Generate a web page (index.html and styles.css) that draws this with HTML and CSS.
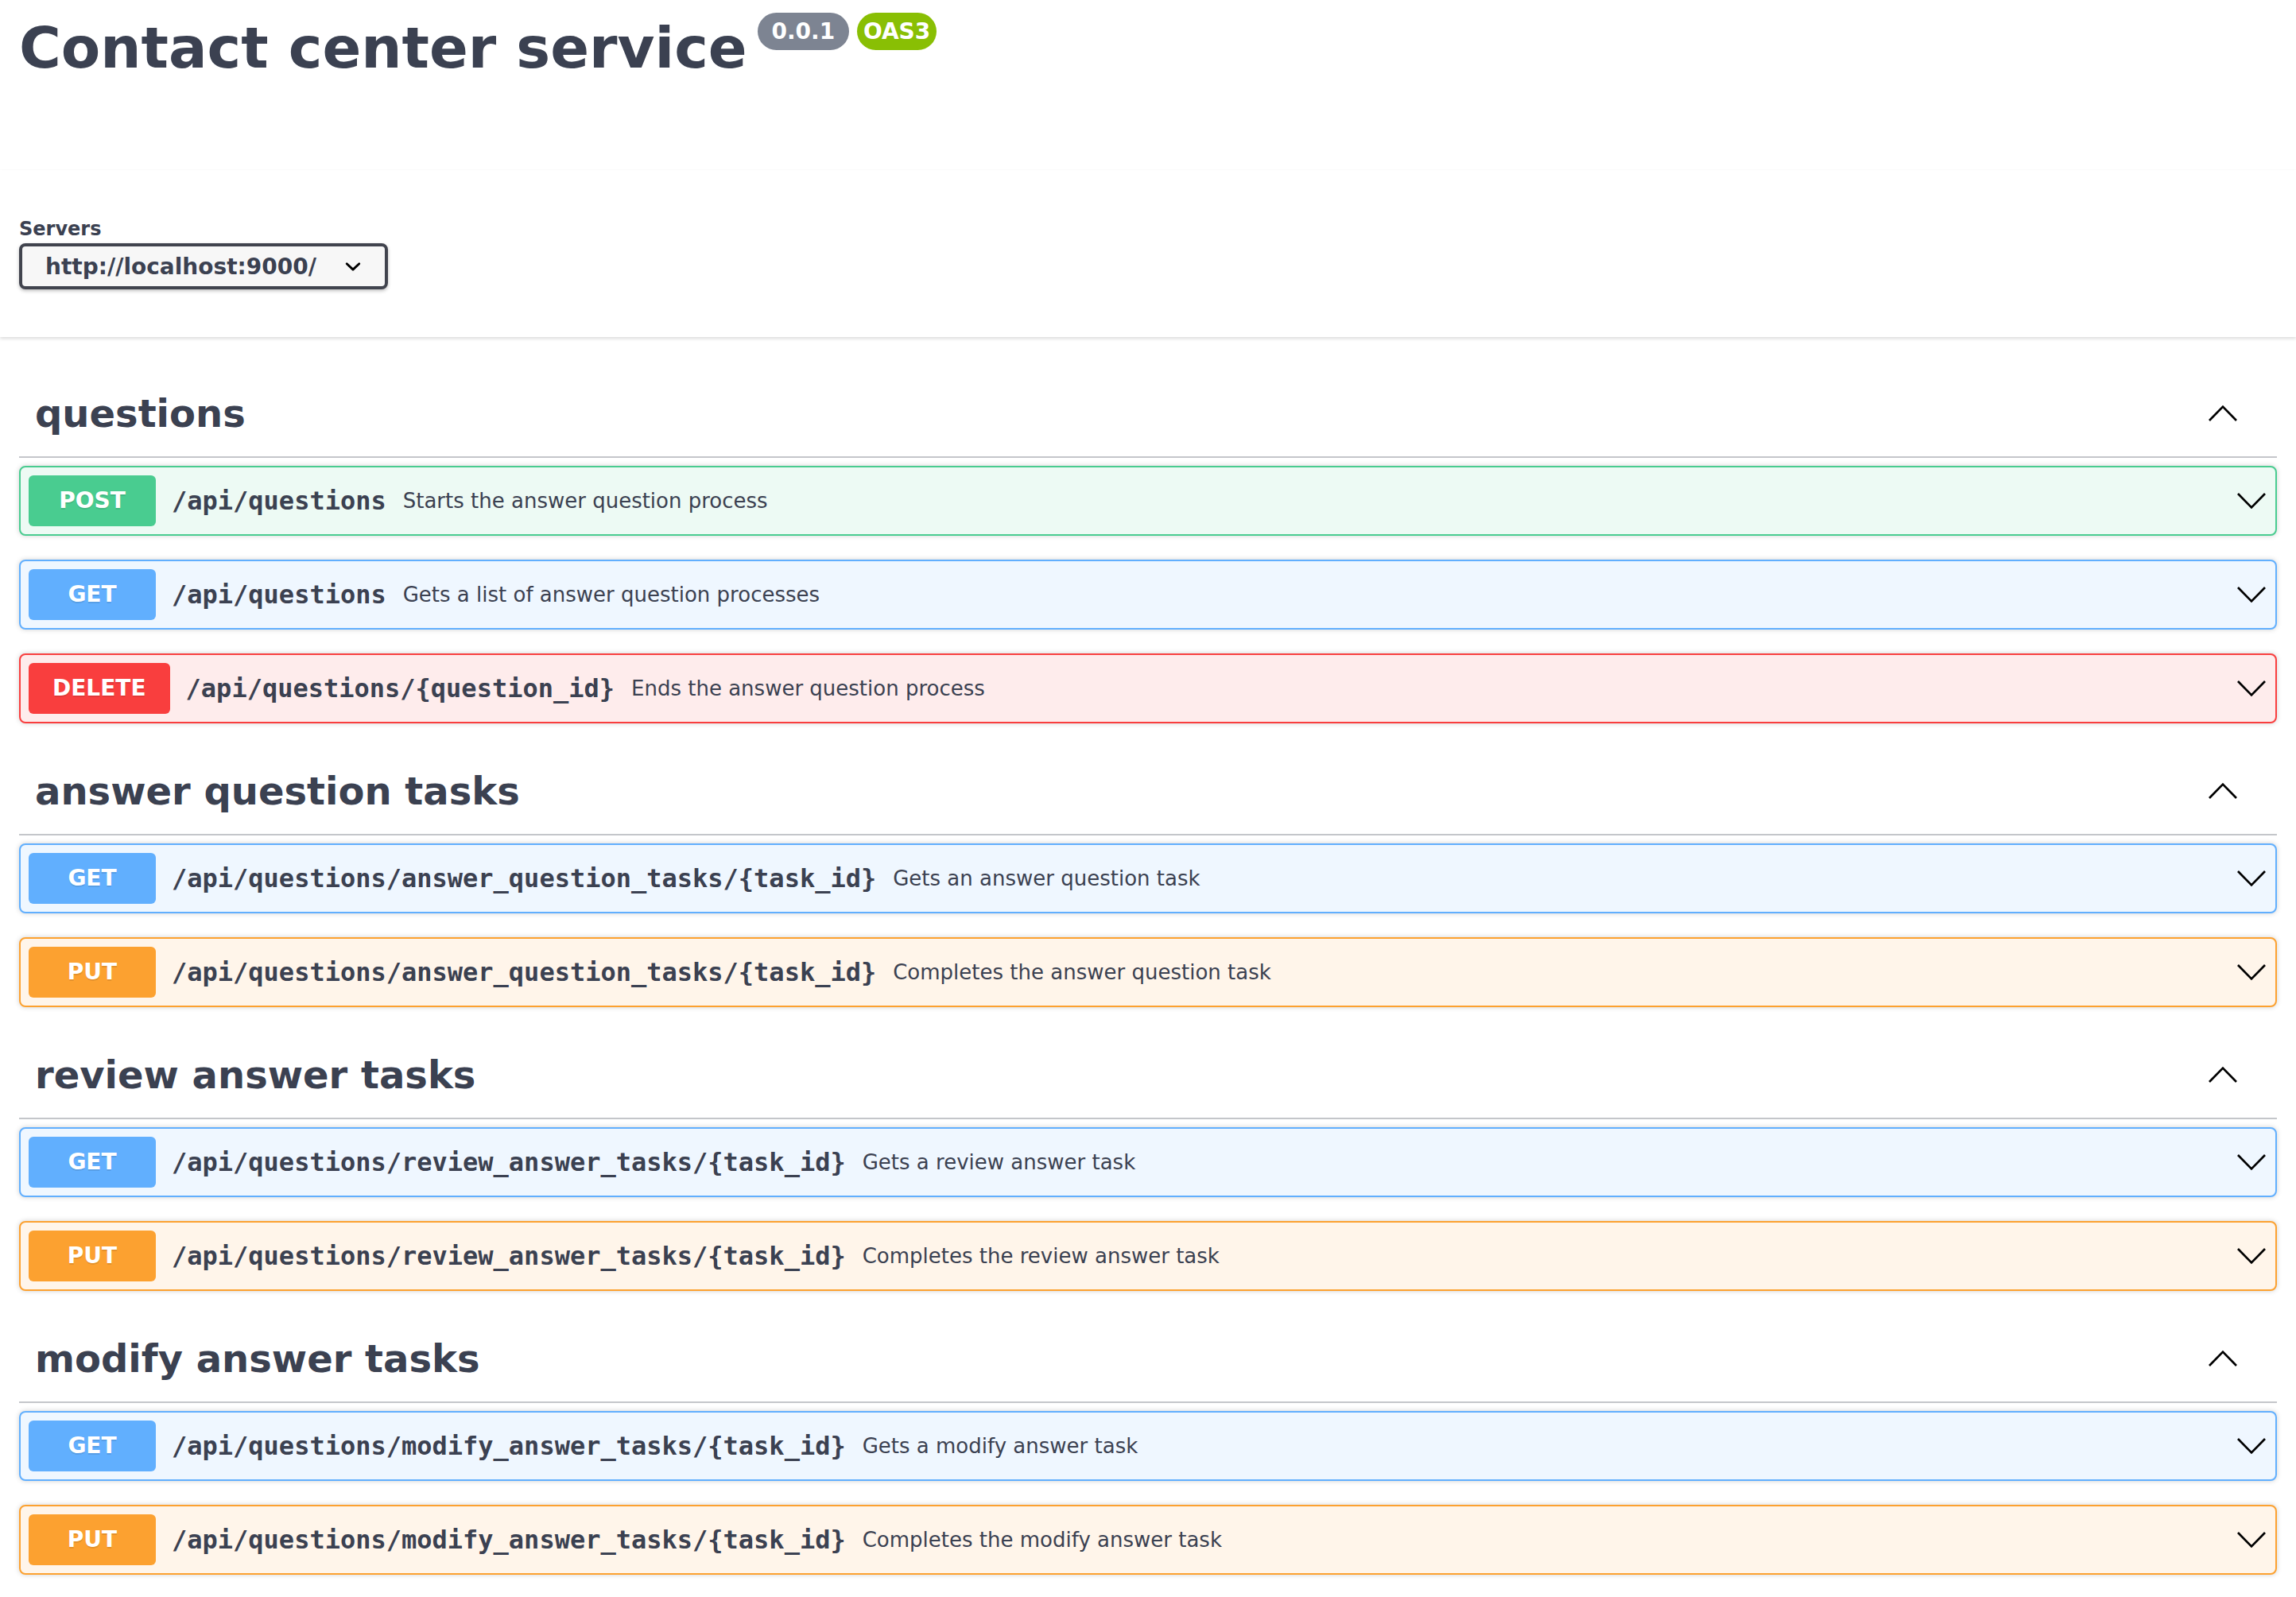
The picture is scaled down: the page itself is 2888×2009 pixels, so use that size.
FILE: index.html
```html
<!DOCTYPE html>
<html lang="en">
<head>
<meta charset="utf-8">
<title>Contact center service</title>
<link rel="stylesheet" href="styles.css">
</head>
<body>
<div class="swagger-ui">
  <div class="wrapper">
    <div class="info">
      <h1 class="title"><span class="title-text">Contact center service</span><small class="stamp version"><pre> 0.0.1 </pre></small><small class="stamp oas"><pre>OAS3</pre></small></h1>
    </div>
  </div>

  <div class="scheme-container">
    <div class="wrapper">
      <div class="servers">
        <span class="servers-title">Servers</span>
        <div class="select"><span>http://localhost:9000/</span><svg class="select-arrow" viewBox="0 0 20 20" width="40" height="40"><path d="M13.418 7.859a.695.695 0 01.978 0 .68.68 0 010 .969l-3.908 3.83a.697.697 0 01-.979 0l-3.908-3.83a.68.68 0 010-.969.695.695 0 01.978 0L10 11l3.418-3.141z"/></svg></div>
      </div>
    </div>
  </div>

  <div class="wrapper ops">
    <section class="tag-section">
      <h3 class="opblock-tag"><span>questions</span><svg class="arrow" viewBox="0 0 20 20" width="40" height="40"><polyline points="1.5,14.5 10,5.8 18.5,14.5"/></svg></h3>
      <div class="opblock post">
        <div class="summary"><span class="method">POST</span><div class="pd"><span class="path">/api/questions</span><span class="desc">Starts the answer question process</span></div><svg class="arrow" viewBox="0 0 20 20" width="40" height="40"><polyline points="1.5,5.5 10,14.2 18.5,5.5"/></svg></div>
      </div>
      <div class="opblock get">
        <div class="summary"><span class="method">GET</span><div class="pd"><span class="path">/api/questions</span><span class="desc">Gets a list of answer question processes</span></div><svg class="arrow" viewBox="0 0 20 20" width="40" height="40"><polyline points="1.5,5.5 10,14.2 18.5,5.5"/></svg></div>
      </div>
      <div class="opblock delete">
        <div class="summary"><span class="method">DELETE</span><div class="pd"><span class="path">/api/questions/{question_id}</span><span class="desc">Ends the answer question process</span></div><svg class="arrow" viewBox="0 0 20 20" width="40" height="40"><polyline points="1.5,5.5 10,14.2 18.5,5.5"/></svg></div>
      </div>
    </section>

    <section class="tag-section">
      <h3 class="opblock-tag"><span>answer question tasks</span><svg class="arrow" viewBox="0 0 20 20" width="40" height="40"><polyline points="1.5,14.5 10,5.8 18.5,14.5"/></svg></h3>
      <div class="opblock get">
        <div class="summary"><span class="method">GET</span><div class="pd"><span class="path">/api/questions/answer_question_tasks/{task_id}</span><span class="desc">Gets an answer question task</span></div><svg class="arrow" viewBox="0 0 20 20" width="40" height="40"><polyline points="1.5,5.5 10,14.2 18.5,5.5"/></svg></div>
      </div>
      <div class="opblock put">
        <div class="summary"><span class="method">PUT</span><div class="pd"><span class="path">/api/questions/answer_question_tasks/{task_id}</span><span class="desc">Completes the answer question task</span></div><svg class="arrow" viewBox="0 0 20 20" width="40" height="40"><polyline points="1.5,5.5 10,14.2 18.5,5.5"/></svg></div>
      </div>
    </section>

    <section class="tag-section">
      <h3 class="opblock-tag"><span>review answer tasks</span><svg class="arrow" viewBox="0 0 20 20" width="40" height="40"><polyline points="1.5,14.5 10,5.8 18.5,14.5"/></svg></h3>
      <div class="opblock get">
        <div class="summary"><span class="method">GET</span><div class="pd"><span class="path">/api/questions/review_answer_tasks/{task_id}</span><span class="desc">Gets a review answer task</span></div><svg class="arrow" viewBox="0 0 20 20" width="40" height="40"><polyline points="1.5,5.5 10,14.2 18.5,5.5"/></svg></div>
      </div>
      <div class="opblock put">
        <div class="summary"><span class="method">PUT</span><div class="pd"><span class="path">/api/questions/review_answer_tasks/{task_id}</span><span class="desc">Completes the review answer task</span></div><svg class="arrow" viewBox="0 0 20 20" width="40" height="40"><polyline points="1.5,5.5 10,14.2 18.5,5.5"/></svg></div>
      </div>
    </section>

    <section class="tag-section">
      <h3 class="opblock-tag"><span>modify answer tasks</span><svg class="arrow" viewBox="0 0 20 20" width="40" height="40"><polyline points="1.5,14.5 10,5.8 18.5,14.5"/></svg></h3>
      <div class="opblock get">
        <div class="summary"><span class="method">GET</span><div class="pd"><span class="path">/api/questions/modify_answer_tasks/{task_id}</span><span class="desc">Gets a modify answer task</span></div><svg class="arrow" viewBox="0 0 20 20" width="40" height="40"><polyline points="1.5,5.5 10,14.2 18.5,5.5"/></svg></div>
      </div>
      <div class="opblock put">
        <div class="summary"><span class="method">PUT</span><div class="pd"><span class="path">/api/questions/modify_answer_tasks/{task_id}</span><span class="desc">Completes the modify answer task</span></div><svg class="arrow" viewBox="0 0 20 20" width="40" height="40"><polyline points="1.5,5.5 10,14.2 18.5,5.5"/></svg></div>
      </div>
    </section>
  </div>
</div>
</body>
</html>
```

FILE: styles.css
```css
html, body {
  margin: 0;
  padding: 0;
  background: #fff;
}
body {
  font-family: "DejaVu Sans", sans-serif;
  color: #3b4151;
}
.wrapper {
  padding: 0 24px;
  box-sizing: border-box;
}
.info {
  padding-top: 18px;
  margin-bottom: 112px;
}
.title {
  display: flex;
  align-items: flex-start;
  margin: 0;
  font-size: 72px;
  line-height: 84px;
  font-weight: 700;
  color: #3b4151;
}
.stamp {
  display: inline-block;
  margin-top: -2px;
  height: 47px;
  padding: 0 8px;
  border-radius: 24px;
  background: #7d8492;
}
.stamp.version { margin-left: 13px; }
.stamp.oas {
  margin-left: 10px;
  background: #89bf04;
}
.stamp pre {
  margin: 0;
  font-family: "DejaVu Sans", sans-serif;
  font-size: 28px;
  font-weight: 700;
  line-height: 47px;
  color: #fff;
  white-space: pre;
}

.scheme-container {
  padding: 60px 0;
  background: #fff;
  box-shadow: 0 2px 4px 0 rgba(0, 0, 0, 0.15);
}
.servers {
  display: flex;
  flex-direction: column;
  align-items: flex-start;
}
.servers-title {
  font-size: 24px;
  line-height: 28px;
  font-weight: 700;
  color: #3b4151;
}
.select {
  margin-top: 4px;
  box-sizing: border-box;
  width: 464px;
  height: 58px;
  display: flex;
  align-items: center;
  padding: 0 20px 0 29px;
  border: 4px solid #41444e;
  border-radius: 8px;
  background: #f7f7f7;
  box-shadow: 0 2px 4px 0 rgba(0, 0, 0, 0.25);
  font-size: 28px;
  font-weight: 700;
  color: #3b4151;
}
.select-arrow {
  margin-left: auto;
  fill: #000;
}

.ops {
  padding-top: 41px;
}
.tag-section {
  display: flex;
  flex-direction: column;
}
.opblock-tag {
  box-sizing: border-box;
  height: 111px;
  margin: 0 0 10px;
  padding: 20px 48px 20px 20px;
  display: flex;
  align-items: center;
  border-bottom: 2px solid rgba(59, 65, 81, 0.3);
  font-size: 48px;
  font-weight: 700;
  color: #3b4151;
}
.arrow {
  flex: 0 0 auto;
  margin-left: auto;
  fill: none;
  stroke: #000;
  stroke-width: 1.35;
}

.opblock {
  margin: 0 0 30px;
  border: 2px solid #000;
  border-radius: 8px;
  box-shadow: 0 0 6px rgba(0, 0, 0, 0.19);
}
.summary {
  display: flex;
  align-items: center;
  padding: 10px;
}
.method {
  box-sizing: border-box;
  min-width: 160px;
  padding: 12px 30px;
  border-radius: 6px;
  font-size: 28px;
  line-height: 40px;
  font-weight: 700;
  text-align: center;
  color: #fff;
  text-shadow: 0 2px 0 rgba(0, 0, 0, 0.1);
}
.pd {
  flex: 1 1 auto;
  display: flex;
  align-items: center;
  gap: 21px;
  padding: 0 20px;
}
.path {
  font-family: "DejaVu Sans Mono", monospace;
  font-size: 32px;
  font-weight: 700;
  color: #3b4151;
}
.desc {
  font-size: 26px;
  color: #3b4151;
}

.opblock.post { background: #edfaf4; border-color: #49cc90; }
.opblock.post .method { background: #49cc90; }
.opblock.get { background: #eff7ff; border-color: #61affe; }
.opblock.get .method { background: #61affe; }
.opblock.delete { background: #feecec; border-color: #f93e3e; }
.opblock.delete .method { background: #f93e3e; }
.opblock.put { background: #fff5ea; border-color: #fca130; }
.opblock.put .method { background: #fca130; }
```
